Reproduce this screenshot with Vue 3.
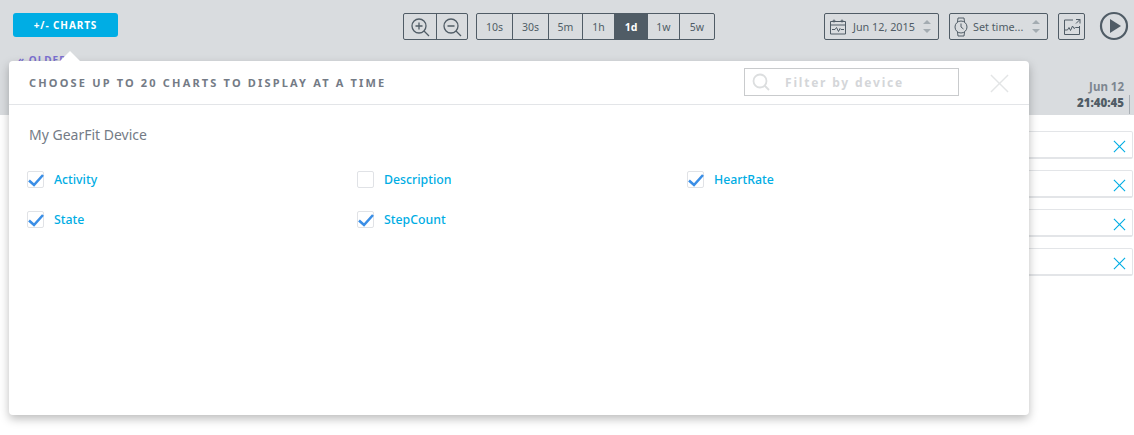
<template>
  <div class="page">
    <header class="toolbar">
      <button class="charts-btn">+/- CHARTS</button>
      <div class="toolbar-mid">
        <div class="seg">
          <span class="seg-icon">
            <svg width="22" height="22" viewBox="0 0 22 22"><circle cx="10" cy="10" r="7" /><path d="M15 15l5 5M10 6.500v7M6.500 10h7" /></svg>
          </span>
          <span class="seg-icon">
            <svg width="22" height="22" viewBox="0 0 22 22"><circle cx="10" cy="10" r="7" /><path d="M15 15l5 5M6.500 10h7" /></svg>
          </span>
        </div>
        <div class="seg">
          <span v-for="r in ranges" :key="r.label" class="range" :class="{ on: r.label === '1d' }" :style="{ width: r.w + 'px' }">{{ r.label }}</span>
        </div>
      </div>
      <div class="toolbar-right">
        <div class="picker date">
          <svg width="18" height="18" viewBox="0 0 18 18"><path d="M1.500 3.500h15v12.500h-15zM1.500 7h15M3 11.500h3l1.500-2 2 4 1.500-3 1 1h3" /><circle cx="5" cy="3" r="1" /><circle cx="13" cy="3" r="1" /></svg>
          <span>Jun 12, 2015</span>
          <i class="spin"></i>
        </div>
        <div class="picker time">
          <svg width="14" height="20" viewBox="0 0 14 20"><circle cx="7" cy="10" r="6" /><path d="M3.500 5l.5-4h6l.5 4M3.500 15l.5 4h6l.5-4M7 6.500V10l2.500 2" /></svg>
          <span>Set time...</span>
          <i class="spin"></i>
        </div>
        <div class="export">
          <svg width="20" height="20" viewBox="0 0 20 20"><path d="M11 3H2.500v14.500h15V9M2.500 13h3l1.500-2.500 1.500 3 2-4.500 1.500 2.500 1.500-1h4M14 2.500h4V6.500M18 2.500L14 6.500" /></svg>
        </div>
        <svg class="play" width="30" height="30" viewBox="0 0 30 30"><circle cx="15" cy="15" r="13" /><path class="tri" d="M11 8l11 7-11 7z" /></svg>
      </div>
    </header>

    <div class="time-band">
      <a class="older">« OLDER</a>
      <div class="stamp">
        <span>Jun 12</span>
        <b>21:40:45</b>
      </div>
    </div>

    <div class="rows">
      <div v-for="n in 4" :key="n" class="row">
        <svg width="13" height="13" viewBox="0 0 14 14"><path d="M1 1l12 12M13 1L1 13" /></svg>
      </div>
    </div>

    <section class="modal">
      <i class="caret"></i>
      <div class="modal-head">
        <h2>CHOOSE UP TO 20 CHARTS TO DISPLAY AT A TIME</h2>
        <div class="filter">
          <svg width="18" height="18" viewBox="0 0 18 18"><circle cx="8" cy="8" r="6.500" /><path d="M12.500 12.500l4.500 4.500" /></svg>
          <span>Filter by device</span>
        </div>
        <svg class="close" width="19" height="19" viewBox="0 0 20 20"><path d="M1 1l18 18M19 1L1 19" /></svg>
      </div>
      <div class="modal-body">
        <h3>My GearFit Device</h3>
        <div class="grid">
          <label v-for="c in charts" :key="c.name" class="item">
            <span class="box">
              <svg v-if="c.on" width="15" height="15" viewBox="0 0 15 15"><path d="M1 8.500l5 4.500 9-10" /></svg>
            </span>
            {{ c.name }}
          </label>
        </div>
      </div>
    </section>
  </div>
</template>

<script setup>
const ranges = [
  { label: '10s', w: 35 },
  { label: '30s', w: 36 },
  { label: '5m', w: 34 },
  { label: '1h', w: 32 },
  { label: '1d', w: 33 },
  { label: '1w', w: 32 },
  { label: '5w', w: 35 }
]

const charts = [
  { name: 'Activity', on: true },
  { name: 'Description', on: false },
  { name: 'HeartRate', on: true },
  { name: 'State', on: true },
  { name: 'StepCount', on: true }
]
</script>

<style>
body {
  background: #fff;
  overflow: hidden;
}
</style>

<style scoped>
.page {
  position: relative;
  width: 1134px;
  height: 435px;
  overflow: hidden;
  font-family: "Noto Sans", "Open Sans", sans-serif;
  color: #505c66;
}

.toolbar {
  height: 53px;
  box-sizing: border-box;
  padding: 13px 0 0 13px;
  display: flex;
  align-items: flex-start;
  background: #d9dcdf;
}

.charts-btn {
  width: 105px;
  height: 24px;
  padding: 0;
  border: 0;
  border-radius: 3px;
  background: #00ade4;
  color: #fff;
  font: 700 10px "Noto Sans", sans-serif;
  letter-spacing: 0.9px;
}

.toolbar-mid {
  display: flex;
  gap: 8px;
  margin-left: 285px;
}

.seg {
  display: flex;
  height: 27px;
  box-sizing: border-box;
  border: 1px solid #505c66;
  border-radius: 2px;
}

.seg-icon {
  box-sizing: border-box;
  width: 32px;
  display: flex;
  align-items: center;
  justify-content: center;
}

.seg-icon + .seg-icon {
  width: 31px;
  border-left: 1px solid #505c66;
}

.seg-icon svg,
.export svg,
.play {
  fill: none;
  stroke: #505c66;
  stroke-width: 1.300;
}

.picker svg,
.export svg {
  fill: none;
  stroke: #505c66;
  stroke-width: 1;
}

.range {
  box-sizing: border-box;
  display: flex;
  align-items: center;
  justify-content: center;
  font-size: 10.500px;
  border-left: 1px solid #505c66;
}

.range:first-child {
  border-left: 0;
}

.range.on {
  background: #505c66;
  color: #fff;
  font-weight: 700;
}

.toolbar-right {
  display: flex;
  align-items: flex-start;
  margin-left: 109px;
  gap: 10px;
}

.picker {
  position: relative;
  height: 27px;
  box-sizing: border-box;
  display: flex;
  align-items: center;
  gap: 6px;
  padding-left: 4px;
  border: 1px solid #505c66;
  border-radius: 2px;
  font-size: 10.800px;
}

.date {
  width: 115px;
}

.time {
  width: 99px;
  gap: 5px;
}

.spin {
  position: absolute;
  right: 7px;
  top: 6px;
  width: 0;
  height: 0;
  border: 4px solid transparent;
  border-top: 0;
  border-bottom: 4px solid #a3abb1;
}

.spin::after {
  content: "";
  position: absolute;
  left: -4px;
  top: 9px;
  border: 4px solid transparent;
  border-bottom: 0;
  border-top: 4px solid #a3abb1;
}

.export {
  width: 27px;
  height: 27px;
  box-sizing: border-box;
  display: flex;
  align-items: center;
  justify-content: center;
  border: 1px solid #505c66;
  border-radius: 2px;
}

.play {
  margin: -2px 0 0 4px;
  stroke-width: 2.200;
}

.play .tri {
  fill: #505c66;
  stroke: none;
}

.time-band {
  height: 62px;
  display: flex;
  justify-content: space-between;
  background: #d9dcdf;
}

.older {
  margin-left: 18px;
  font-size: 10px;
  font-weight: 700;
  letter-spacing: 1px;
  color: #7a6fd0;
}

.stamp {
  display: flex;
  flex-direction: column;
  align-items: flex-end;
  margin-top: 26px;
  margin-right: 4px;
  font-size: 11.500px;
  font-weight: 700;
  line-height: 16px;
  color: #7d8690;
}

.stamp span {
  padding-right: 6px;
}

.stamp b {
  padding: 0 5px 3px 0;
  border-right: 1px solid #a9afb5;
  color: #505c66;
}

.rows {
  display: flex;
  flex-direction: column;
  gap: 11px;
  margin-top: 16px;
  margin-left: 900px;
}

.row {
  width: 233px;
  height: 28px;
  box-sizing: border-box;
  padding: 4px 6px 0 0;
  display: flex;
  align-items: center;
  justify-content: flex-end;
  background: #fff;
  border: 1px solid #e3e5e8;
  border-bottom-width: 2px;
  border-radius: 2px;
}

.row svg {
  fill: none;
  stroke: #00ade4;
  stroke-width: 1.200;
}

.modal {
  position: absolute;
  left: 9px;
  top: 61px;
  width: 1020px;
  height: 354px;
  background: #fff;
  border-radius: 4px;
  box-shadow: 0 4px 10px rgba(0, 0, 0, 0.26);
}

.caret {
  position: absolute;
  left: 51px;
  top: -10px;
  width: 0;
  height: 0;
  border: 10px solid transparent;
  border-top: 0;
  border-bottom: 10px solid #fff;
}

.modal-head {
  position: relative;
  height: 44px;
  box-sizing: border-box;
  display: flex;
  align-items: center;
  border-bottom: 1px solid #e3e5e8;
}

h2 {
  margin: 0 0 0 20px;
  font-size: 11px;
  font-weight: 700;
  letter-spacing: 2.170px;
  color: #747b86;
}

.filter {
  position: absolute;
  left: 735px;
  top: 7px;
  width: 215px;
  height: 28px;
  box-sizing: border-box;
  display: flex;
  align-items: center;
  padding-left: 7px;
  gap: 15px;
  border: 1px solid #c9cbcd;
  font-size: 12px;
  font-weight: 700;
  letter-spacing: 1.800px;
  color: #d4d6d9;
}

.filter svg {
  fill: none;
  stroke: #dcdedf;
  stroke-width: 1.800;
}

.close {
  position: absolute;
  left: 981px;
  top: 13px;
  fill: none;
  stroke: #e3e5e6;
  stroke-width: 1.500;
}

.modal-body {
  padding: 21px 20px 0 18px;
}

h3 {
  margin: 0 0 27px 2px;
  font-size: 14px;
  font-weight: 400;
  line-height: 18px;
  color: #747b86;
}

.grid {
  display: grid;
  grid-template-columns: 330px 330px 1fr;
  row-gap: 23px;
}

.item {
  display: flex;
  align-items: center;
  gap: 10px;
  height: 17px;
  font-size: 12.300px;
  font-weight: 500;
  color: #00ade4;
}

.box {
  box-sizing: border-box;
  width: 17px;
  height: 17px;
  display: flex;
  align-items: center;
  justify-content: center;
  border: 1px solid #e0e2e6;
  border-radius: 2px;
}

.box svg {
  overflow: visible;
  fill: none;
  stroke: #3a8ee6;
  stroke-width: 2.600;
}
</style>
